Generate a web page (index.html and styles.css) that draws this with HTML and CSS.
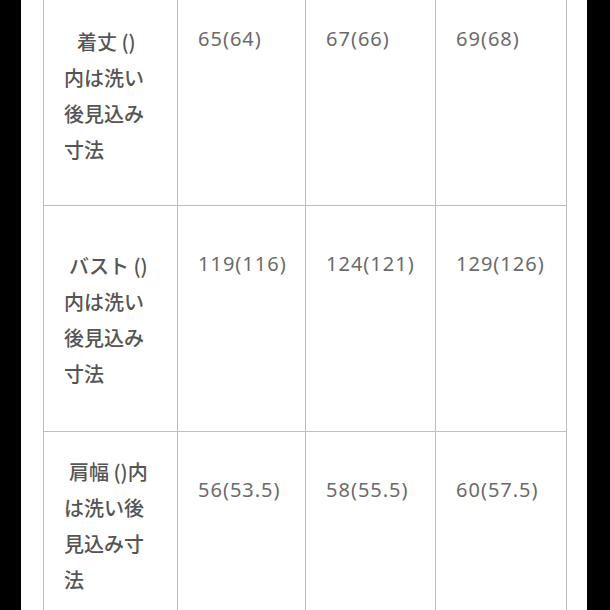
FILE: index.html
```html
<!DOCTYPE html>
<html lang="ja">
<head>
<meta charset="utf-8">
<link rel="stylesheet" href="styles.css">
</head>
<body>
<div class="page">
  <table class="size-table">
    <colgroup>
      <col class="c-head">
      <col class="c-num1">
      <col class="c-num2">
      <col class="c-num3">
    </colgroup>
    <tr class="row row-first">
      <th class="head"><span class="lead lead-wide">着丈 ()</span><br>内は洗い<br>後見込み<br>寸法</th>
      <td class="num">65(64)</td>
      <td class="num">67(66)</td>
      <td class="num">69(68)</td>
    </tr>
    <tr class="row row-mid">
      <th class="head"><span class="lead">バスト ()</span><br>内は洗い<br>後見込み<br>寸法</th>
      <td class="num">119(116)</td>
      <td class="num">124(121)</td>
      <td class="num">129(126)</td>
    </tr>
    <tr class="row row-last">
      <th class="head"><span class="lead">肩幅 ()内</span><br>は洗い後<br>見込み寸<br>法</th>
      <td class="num">56(53.5)</td>
      <td class="num">58(55.5)</td>
      <td class="num">60(57.5)</td>
    </tr>
  </table>
</div>
</body>
</html>
```
FILE: styles.css
```css
html, body {
  margin: 0;
  padding: 0;
  background: #000;
  height: 610px;
  overflow: hidden;
}
.page {
  margin-left: 21px;
  width: 566px;
  height: 610px;
  background: #fff;
  padding: 0 21px 0 22px;
  box-sizing: border-box;
  overflow: hidden;
}
.size-table {
  border-collapse: collapse;
  table-layout: fixed;
  width: 523px;
  font-family: "Noto Sans CJK JP", "Noto Sans", sans-serif;
}
.c-head { width: 134px; }
.c-num1 { width: 128px; }
.c-num2 { width: 130px; }
.c-num3 { width: 131px; }
.size-table th,
.size-table td {
  border: 1px solid #bdbdbd;
  vertical-align: top;
  text-align: left;
  padding: 0 8px 0 20px;
  box-sizing: border-box;
}
.size-table .row-first th { border-top: none; padding-top: 24px; }
.size-table .row-first td { border-top: none; padding-top: 21px; }
.size-table .row-mid th { padding-top: 42px; }
.size-table .row-mid td { padding-top: 40px; }
.size-table .row-last th,
.size-table .row-last td { border-bottom: none; }
.size-table .row-last th { padding-top: 22px; }
.size-table .row-last td { padding-top: 40px; }
.row-first { height: 205px; }
.row-mid { height: 226px; }
.row-last { height: 200px; }
.head {
  font-weight: 500;
  font-size: 20px;
  line-height: 36px;
  color: #555;
}
.lead { padding-left: 5px; }
.lead-wide { padding-left: 13px; }
.num {
  font-family: "Noto Sans", "Noto Sans CJK JP", sans-serif;
  font-size: 20px;
  line-height: 36px;
  letter-spacing: 1px;
  color: #6b6b6b;
}
```
